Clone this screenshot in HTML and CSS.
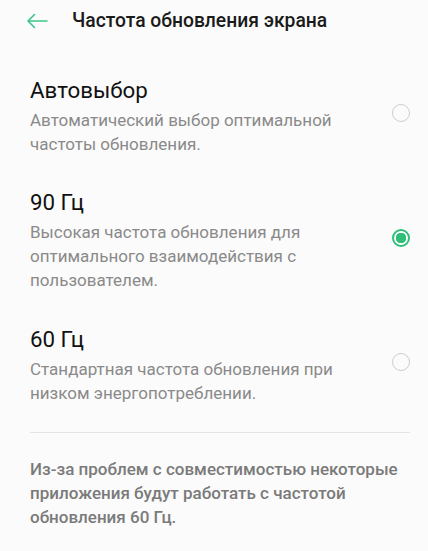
FILE: index.html
```html
<!DOCTYPE html>
<html lang="ru">
<head>
<meta charset="utf-8">
<link rel="stylesheet" href="styles.css">
</head>
<body>
<div class="screen">
  <header class="topbar">
    <svg class="back" width="22" height="16" viewBox="0 0 22 16" aria-hidden="true">
      <path d="M21 8H2M8.5 1.5L2 8l6.5 6.5" fill="none" stroke="#3cc78a" stroke-width="1.6" stroke-linecap="round" stroke-linejoin="round"/>
    </svg>
    <h1 class="title">Частота обновления экрана</h1>
  </header>

  <main class="options">
    <div class="option">
      <div class="option-text">
        <div class="option-title">Автовыбор</div>
        <div class="option-desc">Автоматический выбор оптимальной частоты обновления.</div>
      </div>
      <span class="radio"></span>
    </div>
    <div class="option">
      <div class="option-text">
        <div class="option-title">90 Гц</div>
        <div class="option-desc">Высокая частота обновления для оптимального взаимодействия с пользователем.</div>
      </div>
      <span class="radio checked"></span>
    </div>
    <div class="option">
      <div class="option-text">
        <div class="option-title">60 Гц</div>
        <div class="option-desc">Стандартная частота обновления при низком энергопотреблении.</div>
      </div>
      <span class="radio"></span>
    </div>
  </main>

  <hr class="divider">

  <p class="note">Из-за проблем с совместимостью некоторые приложения будут работать с частотой обновления 60 Гц.</p>
</div>
</body>
</html>
```

FILE: styles.css
```css
html, body {
  margin: 0;
  padding: 0;
  background: #fbfbfb;
}
body {
  font-family: Roboto, "Noto Sans", "Liberation Sans", sans-serif;
  color: #111;
}
.screen {
  width: 428px;
  height: 551px;
  overflow: hidden;
}
.topbar {
  display: flex;
  align-items: center;
  padding: 9px 0 0 26px;
  height: 24px;
}
.back {
  flex: none;
  margin-right: 24px;
}
.title {
  margin: 0;
  font-size: 19.3px;
  font-weight: 500;
  line-height: 24px;
  color: #1a1a1a;
}
.options {
  display: flex;
  flex-direction: column;
  gap: 32.5px;
  margin-top: 42.5px;
  padding: 0 18px 0 30px;
}
.option {
  display: flex;
  align-items: center;
  justify-content: space-between;
}
.option-text {
  width: 345px;
}
.option-title {
  font-size: 22.3px;
  line-height: 28px;
  color: #111;
}
.option-desc {
  margin-top: 4px;
  font-size: 17px;
  line-height: 24px;
  color: #8a8a8a;
}
.radio {
  flex: none;
  box-sizing: border-box;
  width: 18px;
  height: 18px;
  border-radius: 50%;
  border: 1.5px solid #cdcdcd;
  margin-top: -5px;
}
.radio.checked {
  border: 2px solid #2fbf78;
  background: radial-gradient(circle, #2fbf78 0 5px, #fff 5.5px);
}
.divider {
  margin: 27.5px 18px 0 30px;
  border: 0;
  border-top: 1px solid #e4e4e4;
  height: 0;
}
.note {
  margin: 24px 18px 0 30px;
  font-size: 17px;
  font-weight: 500;
  line-height: 24px;
  color: #7a7a7a;
}
```
